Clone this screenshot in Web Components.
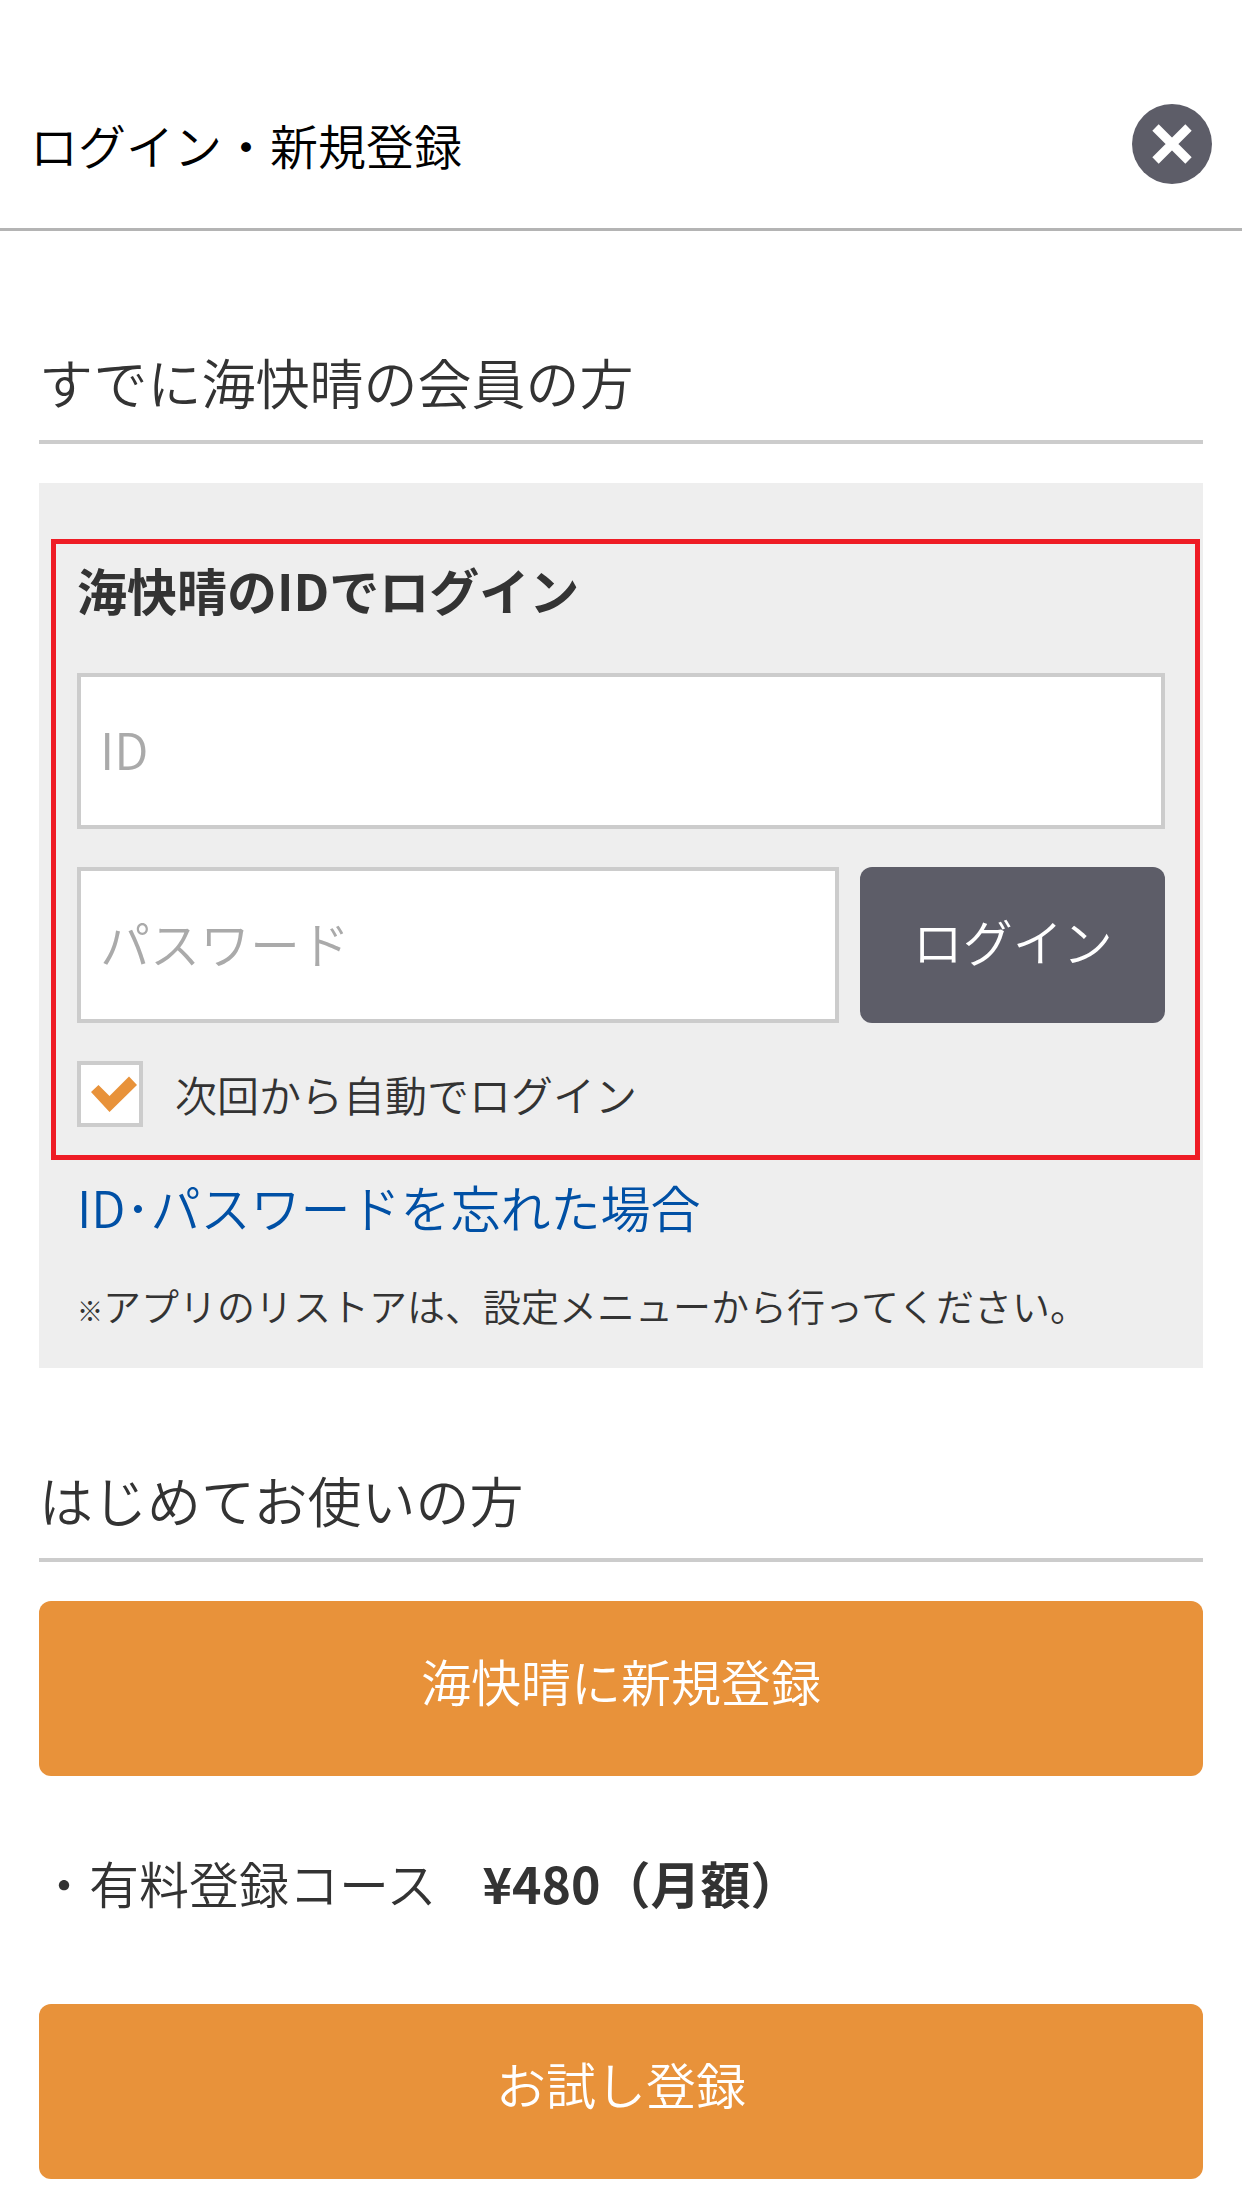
<!DOCTYPE html>
<html lang="ja">
<head>
<meta charset="utf-8">
<meta name="viewport" content="width=device-width, initial-scale=1">
<title>ログイン・新規登録</title>
<style>
  body {
    margin: 0;
    background: #fff;
    color: #333;
    font-family: "Noto Sans CJK JP", sans-serif;
    font-weight: 350;
    font-size: 50px;
    line-height: 60px;
    --rule: #ccc;
    --slate: #5d5d68;
    --accent: #e8923a;
    --gutter: 39px;
  }
</style>
</head>
<body>
<login-page></login-page>

<script>
const define = (name, html, setup) => {
  const template = document.createElement('template');
  template.innerHTML = html;
  customElements.define(name, class extends HTMLElement {
    connectedCallback() {
      if (this.shadowRoot) return;
      this.attachShadow({ mode: 'open' }).append(template.content.cloneNode(true));
      if (setup) setup(this, this.shadowRoot);
    }
  });
};

/* Title bar with a round close button */
define('page-header', `
  <style>
    :host { display: block; border-bottom: 3px solid #b4b4b4; color: #000; }
    header { display: flex; align-items: center; justify-content: space-between; padding: 104px 30px 44px; }
    h1 { margin: 0; font-size: 48px; font-weight: inherit; line-height: 60px; }
    button { flex: none; width: 80px; height: 80px; padding: 0; border: 0; border-radius: 50%; background: var(--slate); }
    svg { display: block; width: 80px; height: 80px; }
  </style>
  <header>
    <h1><slot></slot></h1>
    <button type="button" aria-label="閉じる">
      <svg viewBox="0 0 80 80" aria-hidden="true"><path d="M23.5 23.5 56.5 56.5M56.5 23.5 23.5 56.5" stroke="#fff" stroke-width="9"/></svg>
    </button>
  </header>`);

/* Underlined section heading */
define('section-title', `
  <style>
    :host { display: block; margin-bottom: 39px; }
    h2 { margin: 0; padding-bottom: 18px; border-bottom: 4px solid var(--rule); font-size: 54px; font-weight: inherit; line-height: 80px; }
  </style>
  <h2><slot></slot></h2>`);

/* Bordered single-line text box */
define('text-field', `
  <style>
    :host { display: block; flex: 1; min-width: 0; }
    input { display: block; box-sizing: border-box; width: 100%; height: 156px; margin: 0; padding: 0 19px 6px; border: 4px solid var(--rule); border-radius: 0; background: #fff; color: inherit; font: inherit; outline: 0; }
    input::placeholder { color: #aaa; opacity: 1; }
  </style>
  <input>`, (host, root) => {
    const input = root.querySelector('input');
    input.type = host.getAttribute('type') || 'text';
    input.placeholder = host.getAttribute('label');
    input.setAttribute('aria-label', host.getAttribute('label'));
  });

/* Tick box with its caption */
define('check-field', `
  <style>
    :host { display: block; }
    label { display: flex; align-items: center; gap: 32px; font-size: 42px; }
    .box { display: grid; width: 66px; height: 66px; }
    .box > * { grid-area: 1 / 1; }
    input { appearance: none; box-sizing: border-box; width: 66px; height: 66px; margin: 0; border: 4px solid var(--rule); background: #fff; }
    svg { width: 66px; height: 66px; fill: var(--accent); visibility: hidden; pointer-events: none; }
    input:checked + svg { visibility: visible; }
  </style>
  <label>
    <span class="box">
      <input type="checkbox" checked>
      <svg viewBox="0 0 66 66" aria-hidden="true"><path d="M14 31 21.500 24 32.500 35 52 15.500 60 24 32.500 51Z"/></svg>
    </span>
    <span><slot></slot></span>
  </label>`);

/* Solid button; the "login" variant is the compact slate one */
define('solid-button', `
  <style>
    :host { display: block; }
    button { display: block; width: 100%; margin: 0; padding: 49px 24px 66px; border: 0; border-radius: 12px; background: var(--accent); color: #fff; font: inherit; text-align: center; }
    :host([variant="login"]) { flex: 0 0 28%; }
    :host([variant="login"]) button { padding: 43px 24px 53px; background: var(--slate); }
  </style>
  <button type="button"><slot></slot></button>`);

/* Grey panel with the framed login form */
define('login-panel', `
  <style>
    :host { display: block; padding: 56px 3px 39px 12px; background: #eee; }
    form { display: flex; flex-direction: column; gap: 38px; padding: 15px 30px 28px 21px; border: 5px solid #ee1c25; }
    h3 { margin: 0 0 16px; font-size: inherit; font-weight: 700; line-height: inherit; }
    .row { display: flex; gap: 21px; }
    .below { padding: 16px 26px 0; }
    a { color: #0050a5; text-decoration: none; }
    p { margin: 45px 0 0; font-size: 38px; line-height: 48px; }
    small { font-size: 26px; line-height: 1; }
  </style>
  <form>
    <h3>海快晴のIDでログイン</h3>
    <text-field label="ID"></text-field>
    <div class="row">
      <text-field type="password" label="パスワード"></text-field>
      <solid-button variant="login">ログイン</solid-button>
    </div>
    <check-field>次回から自動でログイン</check-field>
  </form>
  <div class="below">
    <a href="#forgot">ID･パスワードを忘れた場合</a>
    <p><small>※</small>アプリのリストアは、設定メニューから行ってください。</p>
  </div>`);

/* Course name and its price */
define('course-price', `
  <style>
    :host { display: block; padding: 76px 0 92px; }
    p { margin: 0; }
    .gap { font-size: 46px; line-height: 1; }
    b { font-weight: 700; }
  </style>
  <p>・<slot></slot><span class="gap">　</span><b><slot name="price"></slot></b></p>`);

define('login-page', `
  <style>
    :host { display: block; }
    main { padding: 111px var(--gutter) 29px; }
    section + section { margin-top: 92px; }
  </style>
  <page-header>ログイン・新規登録</page-header>
  <main>
    <section>
      <section-title>すでに海快晴の会員の方</section-title>
      <login-panel></login-panel>
    </section>
    <section>
      <section-title>はじめてお使いの方</section-title>
      <solid-button>海快晴に新規登録</solid-button>
      <course-price>有料登録コース<span slot="price">¥480（月額）</span></course-price>
      <solid-button>お試し登録</solid-button>
    </section>
  </main>`);
</script>
</body>
</html>
